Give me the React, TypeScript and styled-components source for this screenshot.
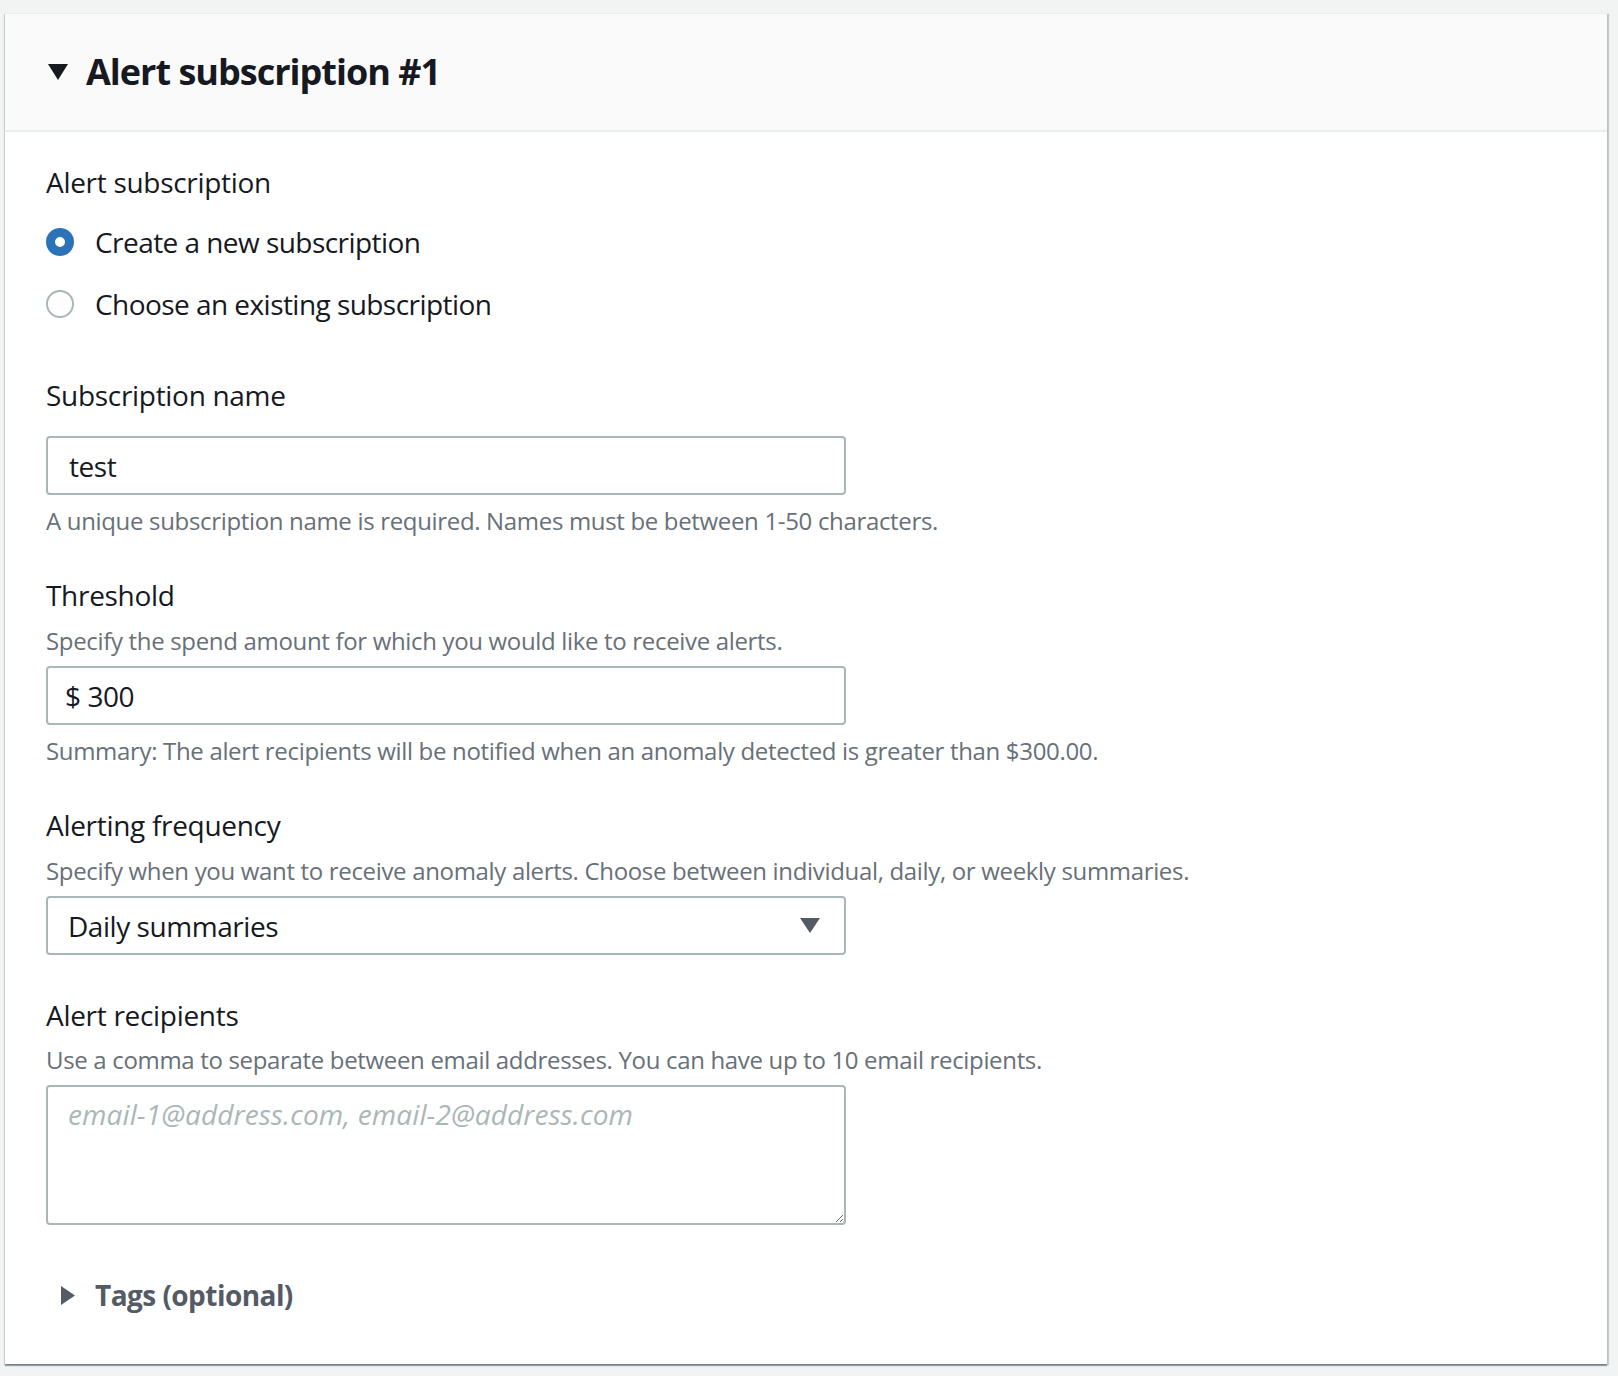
import React from "react";
import styled, { createGlobalStyle } from "styled-components";

const GlobalStyle = createGlobalStyle`
  html, body { margin: 0; padding: 0; background: #f2f3f3; }
  body { font-family: "Open Sans", "Noto Sans", Arial, sans-serif; color: #16191f; }
  * { box-sizing: border-box; }
`;

const Page = styled.div`
  padding: 13px 11px 10px 5px;
`;

const Card = styled.section`
  background: #ffffff;
  border-top: 1px solid #eaeded;
  box-shadow: 0 2px 1px 0 rgba(0, 28, 36, 0.35), 2px 1px 1px 0 rgba(0, 28, 36, 0.18),
    -1px 1px 1px 0 rgba(0, 28, 36, 0.12);
`;

const Header = styled.header`
  display: flex;
  align-items: center;
  gap: 18px;
  min-height: 118px;
  padding: 0 0 0 43px;
  background: #fafafa;
  border-bottom: 2px solid #eaeded;
`;

const Title = styled.h2`
  margin: 0;
  font-size: 36px;
  line-height: 44px;
  font-weight: 700;
  letter-spacing: -1px;
  color: #16191f;
`;

const Body = styled.div`
  padding: 30px 40px 49px 41px;
  display: flex;
  flex-direction: column;
`;

const Field = styled.div<{ $gap?: number }>`
  display: flex;
  flex-direction: column;
  margin-top: ${(p) => p.$gap ?? 0}px;
`;

const Label = styled.div`
  font-size: 28px;
  line-height: 40px;
  letter-spacing: -0.3px;
  color: #16191f;
`;

const Description = styled.div<{ $top?: number }>`
  font-size: 24px;
  line-height: 32px;
  letter-spacing: -0.33px;
  color: #687078;
  margin-top: ${(p) => p.$top ?? 10}px;
`;

const RadioGroup = styled.div`
  display: flex;
  flex-direction: column;
  margin-top: 9px;
`;

const RadioRow = styled.label`
  display: flex;
  align-items: center;
  gap: 21px;
  height: 62px;
  font-size: 28px;
  letter-spacing: -0.55px;
  color: #16191f;
  cursor: pointer;
`;

const RadioCircle = styled.span<{ $checked?: boolean }>`
  width: 28px;
  height: 28px;
  border-radius: 50%;
  flex: none;
  background: #ffffff;
  border: ${(p) => (p.$checked ? "9px solid #2c72b9" : "2px solid #aab7b8")};
`;

const controlBase = `
  width: 800px;
  height: 59px;
  border: 2px solid #aab7b8;
  border-radius: 4px;
  background: #ffffff;
  font-family: "Open Sans", "Noto Sans", Arial, sans-serif;
  font-size: 28px;
  letter-spacing: -0.45px;
  color: #16191f;
  outline: none;
`;

const TextInput = styled.input<{ $top?: number; $pad?: number }>`
  ${controlBase}
  display: block;
  padding: 0 ${(p) => p.$pad ?? 21}px;
  margin-top: ${(p) => p.$top ?? 9}px;
`;

const SelectBox = styled.div`
  ${controlBase}
  display: flex;
  align-items: center;
  justify-content: space-between;
  padding: 0 24px 0 20px;
  margin-top: 9px;
  cursor: pointer;
`;

const TextArea = styled.textarea`
  ${controlBase}
  display: block;
  height: 140px;
  margin-top: 9px;
  padding: 7px 20px;
  resize: vertical;
  line-height: 40px;
  &::placeholder {
    color: #aab7b8;
    font-style: italic;
    letter-spacing: 0.1px;
  }
`;

const Expander = styled.div`
  display: flex;
  align-items: center;
  gap: 20px;
  margin-top: 50px;
  padding-left: 15px;
  height: 40px;
  cursor: pointer;
`;

const ExpanderText = styled.span`
  font-size: 28px;
  font-weight: 700;
  letter-spacing: -0.55px;
  color: #545b64;
`;

const CaretDown = ({ color, w, h }: { color: string; w: number; h: number }) => (
  <svg width={w} height={h} viewBox="0 0 20 16" preserveAspectRatio="none" style={{ flex: "none" }}>
    <polygon points="0,0 20,0 10,16" fill={color} />
  </svg>
);

const CaretRight = () => (
  <svg width="14" height="19" viewBox="0 0 14 19" style={{ flex: "none" }}>
    <polygon points="0,0 14,9.5 0,19" fill="#545b64" />
  </svg>
);

export default function App() {
  return (
    <>
      <GlobalStyle />
      <Page>
        <Card>
          <Header>
            <CaretDown color="#16191f" w={20} h={16} />
            <Title>Alert subscription #1</Title>
          </Header>
          <Body>
            <Field>
              <Label>Alert subscription</Label>
              <RadioGroup>
                <RadioRow>
                  <RadioCircle $checked />
                  Create a new subscription
                </RadioRow>
                <RadioRow>
                  <RadioCircle />
                  Choose an existing subscription
                </RadioRow>
              </RadioGroup>
            </Field>

            <Field $gap={40}>
              <Label>Subscription name</Label>
              <TextInput $top={21} defaultValue="test" />
              <Description>
                A unique subscription name is required. Names must be between 1-50 characters.
              </Description>
            </Field>

            <Field $gap={38}>
              <Label>Threshold</Label>
              <Description>Specify the spend amount for which you would like to receive alerts.</Description>
              <TextInput $pad={17} defaultValue="$ 300" />
              <Description>
                Summary: The alert recipients will be notified when an anomaly detected is greater than $300.00.
              </Description>
            </Field>

            <Field $gap={38}>
              <Label>Alerting frequency</Label>
              <Description>
                Specify when you want to receive anomaly alerts. Choose between individual, daily, or weekly summaries.
              </Description>
              <SelectBox>
                <span>Daily summaries</span>
                <CaretDown color="#545b64" w={20} h={15} />
              </SelectBox>
            </Field>

            <Field $gap={40}>
              <Label>Alert recipients</Label>
              <Description $top={9}>
                Use a comma to separate between email addresses. You can have up to 10 email recipients.
              </Description>
              <TextArea placeholder="email-1@address.com, email-2@address.com" />
            </Field>

            <Expander>
              <CaretRight />
              <ExpanderText>Tags (optional)</ExpanderText>
            </Expander>
          </Body>
        </Card>
      </Page>
    </>
  );
}
